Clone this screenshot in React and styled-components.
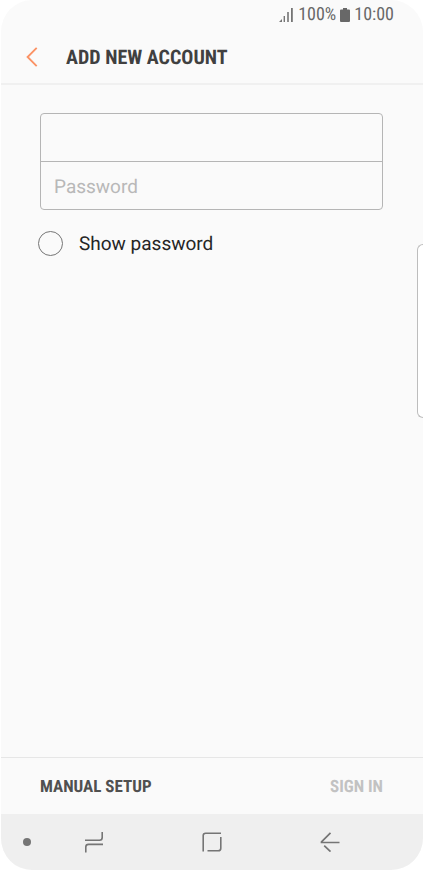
import React, { useState } from "react";
import styled, { createGlobalStyle } from "styled-components";

function App() {
  const [account, setAccount] = useState("");
  const [password, setPassword] = useState("");
  const [showPassword, setShowPassword] = useState(false);

  return (
    <>
      <GlobalStyle />
      <Screen>
        {/* status bar */}
        <StatusBar>
          <SignalIcon />
          <span>100%</span>
          <BatteryIcon />
          <span>10:00</span>
        </StatusBar>

        {/* header */}
        <Header>
          <HeaderBack type="button" aria-label="Back">
            <ChevronIcon />
          </HeaderBack>
          <Title>ADD NEW ACCOUNT</Title>
        </Header>

        {/* form */}
        <Form id="account-form" onSubmit={(e) => e.preventDefault()}>
          <Fields>
            <Field
              type="text"
              aria-label="Email address"
              value={account}
              onChange={(e) => setAccount(e.target.value)}
            />
            <Field
              type={showPassword ? "text" : "password"}
              aria-label="Password"
              placeholder="Password"
              value={password}
              onChange={(e) => setPassword(e.target.value)}
            />
          </Fields>
          <ShowLabel htmlFor="show-password">
            <RoundCheck
              id="show-password"
              type="checkbox"
              checked={showPassword}
              onChange={(e) => setShowPassword(e.target.checked)}
            />
            Show password
          </ShowLabel>
        </Form>

        {/* actions */}
        <Footer>
          <FooterButton type="button">MANUAL SETUP</FooterButton>
          <FooterButton
            type="submit"
            form="account-form"
            disabled={!account || !password}
          >
            SIGN IN
          </FooterButton>
        </Footer>

        {/* navigation bar */}
        <NavBar>
          <DotButton type="button" aria-label="Hide navigation bar">
            <Dot />
          </DotButton>
          <NavButton type="button" aria-label="Recents">
            <RecentsIcon />
          </NavButton>
          <NavButton type="button" aria-label="Home">
            <HomeIcon />
          </NavButton>
          <NavButton type="button" aria-label="Back">
            <BackIcon />
          </NavButton>
        </NavBar>

        <EdgeHandle />
      </Screen>
    </>
  );
}

export default App;

const SignalIcon = () => (
  <svg width="15" height="14" viewBox="0 0 15 14" fill="#757575">
    <path d="M0 14L3 11V14Z" />
    <rect x="4.6" y="8" width="1.4" height="6" />
    <rect x="8.2" y="4" width="1.6" height="10" />
    <rect x="12" y="0" width="1.8" height="14" />
  </svg>
);

const BatteryIcon = () => (
  <svg width="10" height="14" viewBox="0 0 10 14" fill="#686868">
    <path d="M3 0H7V1.5H9Q10 1.5 10 2.5V13Q10 14 9 14H1Q0 14 0 13V2.5Q0 1.5 1 1.5H3Z" />
  </svg>
);

const ChevronIcon = () => (
  <svg width="12" height="20" viewBox="0 0 12 20" fill="none" stroke="#fb9467" strokeWidth="1.9">
    <path d="M10.7 0.9L1.6 10L10.7 19.1" />
  </svg>
);

const RecentsIcon = () => (
  <svg width="20" height="22" viewBox="0 0 20 22" fill="none" stroke="#757575" strokeWidth="1.6">
    <path d="M1 9.2H15.5Q18.2 9.2 18.2 6.5V1" />
    <path d="M19 13.4H4.5Q1.8 13.4 1.8 16V21.6" />
  </svg>
);

const HomeIcon = () => (
  <svg width="20" height="20" viewBox="0 0 20 20" fill="none" stroke="#757575" strokeWidth="1.6">
    <path d="M1.2 19.4V3.6Q1.2 1.2 3.6 1.2H19" />
    <path d="M18.8 5V16.2Q18.8 18.8 16.2 18.8H5.5" />
  </svg>
);

const BackIcon = () => (
  <svg width="20" height="20" viewBox="0 0 20 20" fill="none" stroke="#757575" strokeWidth="1.7">
    <path d="M10.5 0.8L1.5 9.8V10.5H19.5" />
    <path d="M4.2 13.6L10.5 19.6" />
  </svg>
);

const GlobalStyle = createGlobalStyle`
  * {
    box-sizing: border-box;
  }
  body {
    margin: 0;
    background-color: white;
    font-family: Roboto, "Liberation Sans", sans-serif;
    text-rendering: geometricPrecision;
  }
  button,
  input {
    text-rendering: inherit;
  }
  button {
    padding: 0;
    border: none;
    background: none;
    cursor: pointer;
  }
  svg {
    display: block;
  }
`;

const Screen = styled.div`
  position: relative;
  display: flex;
  flex-direction: column;
  min-height: 100vh;
  overflow: hidden;
  border-left: 1px solid white;
  border-radius: 32px;
  background-color: #fafafa;
`;

const StatusBar = styled.div`
  display: flex;
  align-items: center;
  justify-content: flex-end;
  gap: 4px;
  height: 28px;
  padding: 1px 29px 0 0;
  color: #686868;
  font-family: "Roboto Condensed", Roboto, sans-serif;
  font-size: 18px;
  line-height: 28px;
`;

const Header = styled.header`
  display: flex;
  align-items: center;
  height: 57px;
  padding: 2px 25px 0;
  border-bottom: 2px solid #f0f0f0;
`;

const HeaderBack = styled.button`
  width: 40px;
`;

const Title = styled.h1`
  margin: 0;
  color: #404040;
  font-family: "Roboto Condensed", Roboto, sans-serif;
  font-size: 20px;
  font-weight: 700;
  line-height: 24px;
`;

const Form = styled.form`
  flex: 1;
  padding: 28px 40px 0 39px;
`;

const Fields = styled.div`
  overflow: hidden;
  border: 1px solid #b5b5b5;
  border-radius: 4px;
`;

const Field = styled.input`
  display: block;
  width: 100%;
  height: 47px;
  padding: 0 13px;
  border: none;
  outline: none;
  background: transparent;
  color: #252525;
  font-family: inherit;
  font-size: 19px;

  & + & {
    height: 48px;
    padding-top: 2px;
    border-top: 1px solid #b5b5b5;
  }
  &::placeholder {
    color: #b8b8b8;
    opacity: 1;
  }
`;

const ShowLabel = styled.label`
  display: inline-flex;
  align-items: center;
  gap: 16px;
  margin: 21px 0 0 -2px;
  color: #252525;
  font-size: 19px;
  line-height: 24px;
  cursor: pointer;
`;

const RoundCheck = styled.input`
  appearance: none;
  width: 25px;
  height: 25px;
  margin: 0;
  border: 1px solid #757575;
  border-radius: 50%;

  &:checked {
    background-color: #fb9467;
    border-color: #fb9467;
  }
`;

const Footer = styled.footer`
  display: flex;
  align-items: center;
  justify-content: space-between;
  height: 57px;
  padding: 2px 40px 0 39px;
  border-top: 1px solid #e6e6e6;
`;

const FooterButton = styled.button`
  color: #505050;
  font-family: "Roboto Condensed", Roboto, sans-serif;
  font-size: 17px;
  font-weight: 700;
  line-height: 24px;

  &:disabled {
    color: #c2c2c2;
    cursor: default;
  }
`;

const NavBar = styled.nav`
  display: grid;
  grid-template-columns: 34px repeat(3, 1fr);
  height: 56px;
  padding-right: 34px;
  background-color: #efefef;
`;

const NavButton = styled.button`
  display: flex;
  align-items: center;
  justify-content: center;
`;

const DotButton = styled(NavButton)`
  justify-content: flex-end;
  padding-right: 4px;
`;

const Dot = styled.span`
  width: 8px;
  height: 8px;
  border-radius: 50%;
  background-color: #757575;
`;

/* edge panel tab, lies over the screen */
const EdgeHandle = styled.div`
  position: absolute;
  top: 244px;
  right: 0;
  width: 6px;
  height: 174px;
  border: 1px solid #bdbdbd;
  border-right: none;
  border-radius: 6px 0 0 6px;
  background-color: white;
`;
